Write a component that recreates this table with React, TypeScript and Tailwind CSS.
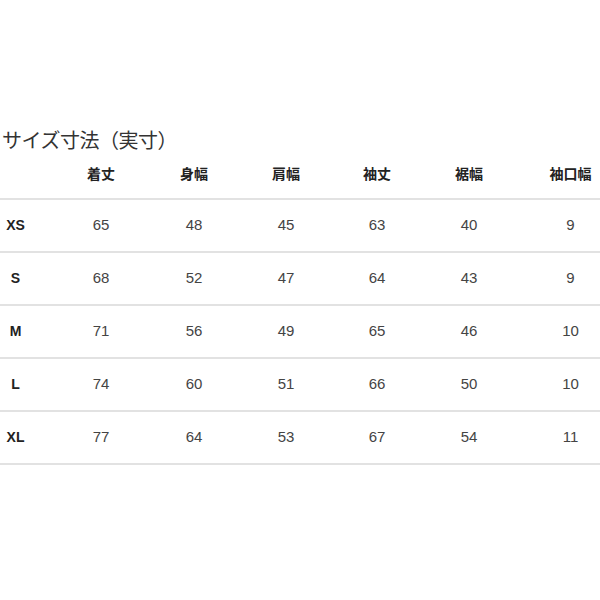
const columns = ['着丈', '身幅', '肩幅', '袖丈', '裾幅', '袖口幅'];

const rows: { size: string; values: number[] }[] = [
  { size: 'XS', values: [65, 48, 45, 63, 40, 9] },
  { size: 'S', values: [68, 52, 47, 64, 43, 9] },
  { size: 'M', values: [71, 56, 49, 65, 46, 10] },
  { size: 'L', values: [74, 60, 51, 66, 50, 10] },
  { size: 'XL', values: [77, 64, 53, 67, 54, 11] }
];

// label column, five even columns, then the wider 袖口幅 column pushed right
const grid = 'grid grid-cols-[30px_25px_92px_94px_90px_92px_92px_1fr] items-center';

export default function App() {
  return (
    <div className="h-[600px] w-[600px] bg-white pt-[128px] font-['Liberation_Sans','Noto_Sans_CJK_JP',sans-serif] text-[#333]">
      <h2 className="pl-[2px] font-['Noto_Sans_CJK_JP',sans-serif] text-[20px] leading-[24px] font-normal tracking-[-0.5px] text-[#333]">
        サイズ寸法（実寸）
      </h2>

      <div className={`${grid} mt-[11px] border-b-2 border-[#e2e2e2] pb-[15px]`}>
        <span />
        <span />
        {columns.map((c, i) => (
          <span
            key={c}
            className={`text-center font-['Noto_Sans_CJK_JP',sans-serif] text-[14px] leading-[20px] font-bold text-[#222] ${
              i === columns.length - 1 ? 'pl-[26px]' : ''
            }`}
          >
            {c}
          </span>
        ))}
      </div>

      {rows.map((r) => (
        <div key={r.size} className={`${grid} h-[53px] border-b-2 border-[#e2e2e2]`}>
          <span className="pl-[1px] text-center text-[14px] font-bold text-[#222]">{r.size}</span>
          <span />
          {r.values.map((v, i) => (
            <span
              key={i}
              className={`text-center text-[15px] text-[#444] ${i === r.values.length - 1 ? 'pl-[26px]' : ''}`}
            >
              {v}
            </span>
          ))}
        </div>
      ))}
    </div>
  );
}
